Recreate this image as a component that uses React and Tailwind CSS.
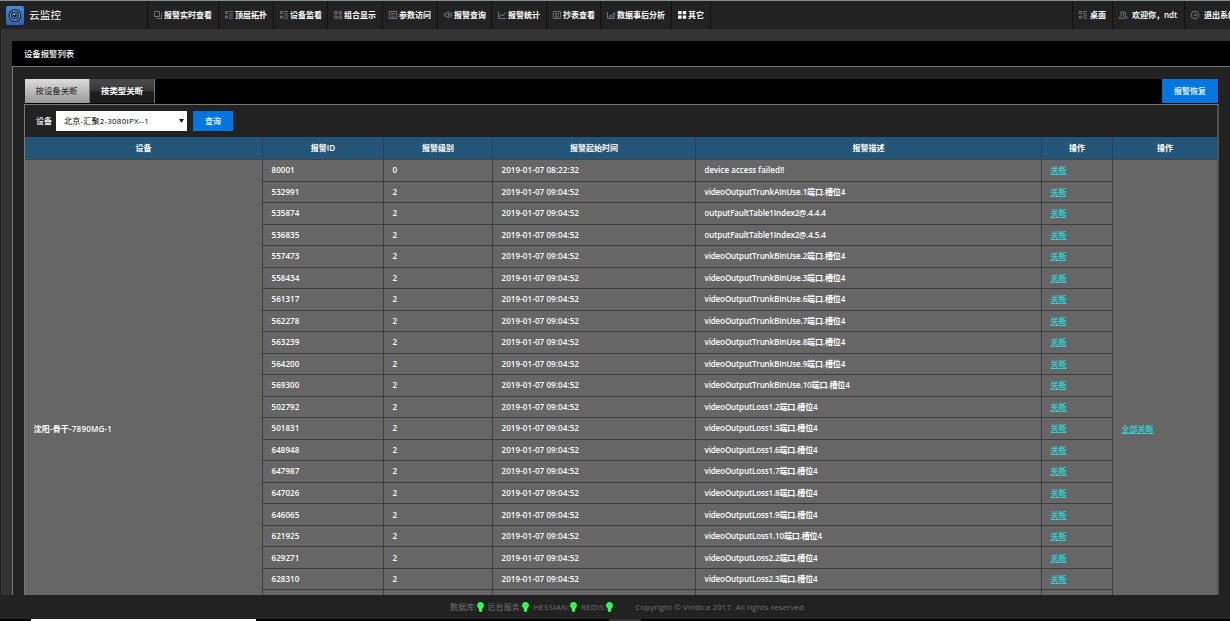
import clsx from 'clsx';

const menus = [
    { label: '报警实时查看', icon: 'layers', cls: 'w-[71px]' },
    { label: '顶层拓扑', icon: 'list', cls: 'w-[55px]' },
    { label: '设备监看', icon: 'list', cls: 'w-[54px]' },
    { label: '组合显示', icon: 'grid', cls: 'w-[55px]' },
    { label: '参数访问', icon: 'form', cls: 'w-[55px]' },
    { label: '报警查询', icon: 'sound', cls: 'w-[54px]' },
    { label: '报警统计', icon: 'chart', cls: 'w-[55px]' },
    { label: '抄表查看', icon: 'form', cls: 'w-[54px]' },
    { label: '数据事后分析', icon: 'area', cls: 'w-[71px]' },
    { label: '其它', icon: 'blocks', cls: 'w-[39px]' }
];

const userMenus = [
    { label: '桌面', icon: 'list', cls: 'w-[40px]' },
    { label: '欢迎你，ndt', icon: 'users', cls: 'w-[72px]' },
    { label: '退出系统', icon: 'exit', cls: 'w-[72px]' }
];

const time = '2019-01-07 09:04:52';
const rows = [
    ['80001', '0', '2019-01-07 08:22:32', 'device access failed!!'],
    ['532991', '2', time, 'videoOutputTrunkAInUse.1端口.槽位4'],
    ['535874', '2', time, 'outputFaultTable1Index2@.4.4.4'],
    ['536835', '2', time, 'outputFaultTable1Index2@.4.5.4'],
    ['557473', '2', time, 'videoOutputTrunkBInUse.2端口.槽位4'],
    ['558434', '2', time, 'videoOutputTrunkBInUse.3端口.槽位4'],
    ['561317', '2', time, 'videoOutputTrunkBInUse.6端口.槽位4'],
    ['562278', '2', time, 'videoOutputTrunkBInUse.7端口.槽位4'],
    ['563239', '2', time, 'videoOutputTrunkBInUse.8端口.槽位4'],
    ['564200', '2', time, 'videoOutputTrunkBInUse.9端口.槽位4'],
    ['569300', '2', time, 'videoOutputTrunkBInUse.10端口.槽位4'],
    ['502792', '2', time, 'videoOutputLoss1.2端口.槽位4'],
    ['501831', '2', time, 'videoOutputLoss1.3端口.槽位4'],
    ['648948', '2', time, 'videoOutputLoss1.6端口.槽位4'],
    ['647987', '2', time, 'videoOutputLoss1.7端口.槽位4'],
    ['647026', '2', time, 'videoOutputLoss1.8端口.槽位4'],
    ['646065', '2', time, 'videoOutputLoss1.9端口.槽位4'],
    ['621925', '2', time, 'videoOutputLoss1.10端口.槽位4'],
    ['629271', '2', time, 'videoOutputLoss2.2端口.槽位4'],
    ['628310', '2', time, 'videoOutputLoss2.3端口.槽位4']
];

const cols = 'grid grid-cols-[121px_109px_203px_346px_71px]';
const tracking = ['tracking-[0.08px]', '', 'tracking-[0.1px]', 'tracking-[-0.12px]'];

const icons = {
    layers: <path d="M.5.5h5v5h-5zM2.5 7.5h5v-5" />,
    list: <path d="M.5.5h2v2h-2zM.5 5h2v2h-2zM4 .5h4M4 2.8h4M4 5h4M4 7.3h4" />,
    grid: <path d="M.5.5h2.5v2.5H.5zM5 .5h2.5v2.5H5zM.5 5h2.5v2.5H.5zM5 5h2.5v2.5H5z" />,
    form: <path d="M.3.5h7.4v7H.3zM2 2.5h4M2 4h2M5 4h1M2 5.8h4" />,
    sound: <path d="M.5 2.8H2L4.3.7v6.6L2 5.2H.5zM5.6 2.5q1 1.5 0 3M6.5 1q2 3 0 6" />,
    chart: <path d="M.5.5v7H8M1.5 6l2-3 1.5 2 2.5-3.5" />,
    area: <path d="M.5 1v6.5H8M2 6l1.5-2 1 1 3-3.5V6z" />,
    blocks: <path d="M0 0h3.5v3.2H0zM4.7 0h3.5v3.2H4.7zM0 4.6h3.5v3.2H0zM4.7 4.6h3.5v3.2H4.7z" />,
    users: <path d="M3 .6c2 0 2 2.6.8 3.8L6 6v1.3H.5V6l2-1.6C1.3 3 1.5.6 3 .6zM5 .7c2 0 2.3 2 1.2 3.5L8 6v1.3H7" />,
    exit: <path d="M4 .2a3.8 3.8 0 1 0 0 7.6 3.8 3.8 0 0 0 0-7.6zM2.3 4h3.2M4 2.5 5.6 4 4 5.5" />
};

function Icon({ name }) {
    const solid = name === 'blocks';
    return (
        <svg
            className="h-[8px] w-[8px] shrink-0 overflow-visible"
            viewBox="0 0 8 8"
            fill={solid ? '#fff' : 'none'}
            stroke={solid ? 'none' : '#7c7c7c'}
            strokeWidth="0.9"
        >
            {icons[name]}
        </svg>
    );
}

function MenuItem({ label, icon, cls, gap = 'gap-[2px]' }) {
    return (
        <a
            className={clsx(
                'flex h-full shrink-0 items-center border-l border-[#111118] pl-[6px] font-semibold whitespace-nowrap',
                gap,
                cls
            )}
        >
            <Icon name={icon} />
            <span>{label}</span>
        </a>
    );
}

function Logo() {
    return (
        <svg className="h-[19px] w-[18px]" viewBox="0 0 18 19">
            <defs>
                <linearGradient id="logoBg" x1="0" y1="0" x2="0" y2="1">
                    <stop offset="0" stopColor="#4a86d8" />
                    <stop offset="1" stopColor="#2f5fc0" />
                </linearGradient>
            </defs>
            <rect width="18" height="19" rx="2" fill="url(#logoBg)" />
            <circle cx="9" cy="9.5" r="5.8" fill="#8fa9c4" stroke="#0a1220" strokeWidth="1.1" />
            <circle cx="9" cy="9.5" r="4.1" fill="#081a30" />
            <circle cx="9" cy="9.5" r="2.9" fill="#2c7fc4" />
            <circle cx="9" cy="9.6" r="1.7" fill="#04101f" />
            <circle cx="8.4" cy="8.4" r="0.7" fill="#e8f4ff" />
        </svg>
    );
}

function Header() {
    return (
        <header className="flex h-[29px] shrink-0 border-t border-[#8a908d] bg-[#222]">
            <div className="flex w-[147px] shrink-0 items-center gap-[5px] pl-[6px] text-[10.7px]">
                <Logo />
                <span>云监控</span>
            </div>
            {menus.map((m) => (
                <MenuItem key={m.label} {...m} />
            ))}
            <div className="w-[362px] shrink-0 border-l border-[#111118]" />
            {userMenus.map((m) => (
                <MenuItem key={m.label} {...m} gap={m.icon === 'list' ? 'gap-[3px]' : 'gap-[5px]'} />
            ))}
        </header>
    );
}

function AlarmTable() {
    const cell = 'flex items-center border-r border-[#3d3d3d] pl-[8.5px]';
    const head = 'flex items-center justify-center border-r border-[#24425a]';
    return (
        <div className="font-semibold">
            <div className="flex h-[22px] bg-[#225578]">
                <div className={clsx(head, 'w-[238px]')}>设备</div>
                <div className={cols}>
                    {['报警ID', '报警级别', '报警起始时间', '报警描述', '操作'].map((h) => (
                        <div key={h} className={head}>
                            {h}
                        </div>
                    ))}
                </div>
                <div className="flex flex-1 items-center justify-center">操作</div>
            </div>
            <div className="flex h-[538px] border-t border-[#444] bg-[#666]">
                <div className={clsx(cell, 'w-[238px] tracking-[0.2px]')}>沈阳-骨干-7890MG-1</div>
                <div>
                    {rows.map((r) => (
                        <div key={r[0]} className={clsx(cols, 'h-[21.53px] border-b border-[#3d3d3d]')}>
                            {r.map((v, i) => (
                                <div key={i} className={clsx(cell, !v.startsWith('device') && tracking[i])}>
                                    {v}
                                </div>
                            ))}
                            <div className={cell}>
                                <a className="text-[#35c9c9] underline">关断</a>
                            </div>
                        </div>
                    ))}
                    <div className={clsx(cols, 'h-[108px]')}>
                        {[0, 1, 2, 3, 4].map((i) => (
                            <div key={i} className={cell} />
                        ))}
                    </div>
                </div>
                <div className="flex flex-1 items-center pl-[8.5px]">
                    <a className="text-[#35c9c9] underline">全部关断</a>
                </div>
            </div>
        </div>
    );
}

function Status({ label, cls }) {
    return (
        <span className={clsx('flex items-center', cls)}>
            {label}:
            <svg className="mr-[4px] h-[10px] w-[7px]" viewBox="0 0 7 10" fill="#2dfc52">
                <path d="M3.5 0C1.4 0 .1 1.4.1 3.2c0 1.5 1 2.7 1.8 3.8V9l.9 1h1.4l.9-1V7c.8-1.1 1.8-2.3 1.8-3.8C6.9 1.4 5.6 0 3.5 0z" />
            </svg>
        </span>
    );
}

function Footer() {
    return (
        <footer className="shrink-0">
            <div className="flex h-[24px] items-center bg-[#222] pl-[450px] text-[#707070]">
                <Status label="数据库" cls="tracking-[0.1px]" />
                <Status label="后台服务" cls="tracking-[0.1px]" />
                <Status label="HESSIAN" cls="tracking-[0.3px]" />
                <Status label="REDIS" cls="tracking-[0.2px]" />
                <span className="ml-[18px] tracking-[0.07px]">Copyright © Vindica 2017. All rights reserved</span>
            </div>
            <div className="flex h-[2px] bg-black">
                <div className="ml-[31px] w-[225px] bg-white" />
                <div className="ml-[353px] w-[32px] bg-[#333]" />
            </div>
        </footer>
    );
}

export default function App() {
    return (
        <div className="flex h-[621px] w-[1230px] flex-col overflow-hidden bg-[#333] font-['Open_Sans','Noto_Sans_CJK_SC',sans-serif] text-[8px] leading-[12px] text-white">
            <Header />
            <main className="flex min-h-0 flex-1 flex-col overflow-hidden border-l border-[#222] pt-[12px] pl-[11px]">
                <div className="flex h-[25px] shrink-0 items-center bg-black pl-[12px] text-[8.4px] font-medium">
                    设备报警列表
                </div>
                <div className="min-h-0 flex-1 overflow-hidden border-t border-l border-[#777] bg-[#222] pt-[12px] pr-[11px] pl-[11px]">
                    <div className="flex h-[25px] bg-black">
                        <div className="flex h-[24px] w-[66px] items-center justify-center border-r border-l border-r-[#777] border-l-[#222] bg-linear-to-b from-[#ddd] to-[#999] pr-px text-[8.4px] text-[#222]">
                            按设备关断
                        </div>
                        <div className="flex h-[24px] w-[65px] items-center justify-center border-r border-[#777] bg-linear-to-b from-[#464646] from-20% via-[#333] via-50% to-[#1c1c1c] to-55% text-[8.4px] font-semibold">
                            按类型关断
                        </div>
                        <button className="mr-px ml-auto h-[24px] w-[56px] bg-[#0077e0] font-medium">报警恢复</button>
                    </div>
                    <div className="border border-r-2 border-[#777] border-r-[#505050]">
                        <div className="flex h-[32px] items-center pl-[11px]">
                            <span className="w-[20px] font-medium">设备</span>
                            <div className="flex h-[20px] w-[131px] items-center justify-between bg-white pr-[3px] pl-[8px] text-black">
                                <span className="tracking-[0.22px]">北京-汇聚2-3080IPX--1</span>
                                <svg className="h-[4px] w-[5px]" viewBox="0 0 5 4">
                                    <path d="M0 0h5L2.5 4z" fill="#111" />
                                </svg>
                            </div>
                            <button className="ml-[6px] h-[20px] w-[40px] bg-[#0077e0] font-medium">查询</button>
                        </div>
                        <AlarmTable />
                    </div>
                </div>
            </main>
            <Footer />
        </div>
    );
}
